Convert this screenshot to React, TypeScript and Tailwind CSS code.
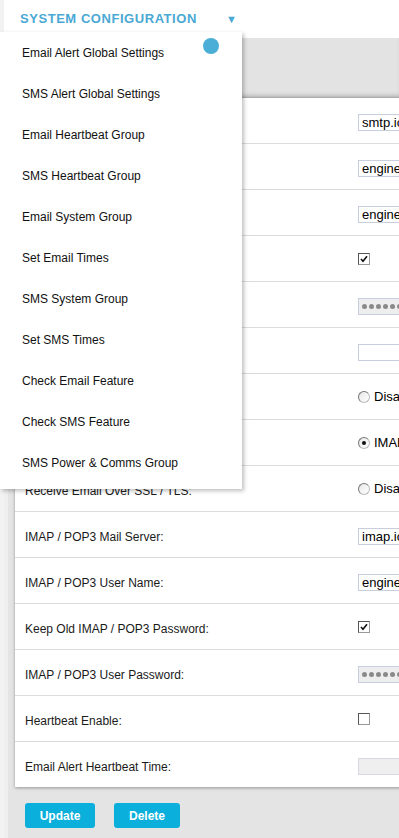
import React from "react";

type Row =
  | { label: string; kind: "text"; value: string }
  | { label: string; kind: "password"; disabled?: boolean }
  | { label: string; kind: "empty"; disabled?: boolean }
  | { label: string; kind: "check"; checked: boolean }
  | { label: string; kind: "radio"; options: string[]; selected: number };

const rows: Row[] = [
  { label: "SMTP Mail Server:", kind: "text", value: "smtp.icloud.com" },
  { label: "SMTP User Name:", kind: "text", value: "engineer@example.com" },
  { label: "Email From Address:", kind: "text", value: "engineer@example.com" },
  { label: "Keep Old SMTP Password:", kind: "check", checked: true },
  { label: "SMTP User Password:", kind: "password" },
  { label: "SMTP Port:", kind: "empty" },
  { label: "Send Email Over SSL / TLS:", kind: "radio", options: ["Disabled", "Enabled"], selected: -1 },
  { label: "Receive Email Protocol:", kind: "radio", options: ["IMAP", "POP3"], selected: 0 },
  { label: "Receive Email Over SSL / TLS:", kind: "radio", options: ["Disabled", "Enabled"], selected: -1 },
  { label: "IMAP / POP3 Mail Server:", kind: "text", value: "imap.icloud.com" },
  { label: "IMAP / POP3 User Name:", kind: "text", value: "engineer" },
  { label: "Keep Old IMAP / POP3 Password:", kind: "check", checked: true },
  { label: "IMAP / POP3 User Password:", kind: "password" },
  { label: "Heartbeat Enable:", kind: "check", checked: false },
  { label: "Email Alert Heartbeat Time:", kind: "empty", disabled: true },
];

const menuItems = [
  "Email Alert Global Settings",
  "SMS Alert Global Settings",
  "Email Heartbeat Group",
  "SMS Heartbeat Group",
  "Email System Group",
  "Set Email Times",
  "SMS System Group",
  "Set SMS Times",
  "Check Email Feature",
  "Check SMS Feature",
  "SMS Power & Comms Group",
];

const Checkbox = ({ checked }: { checked: boolean }) => (
  <span className="w-[12px] h-[12px] border border-t-[#555] border-l-[#555] border-r-[#999] border-b-[#999] bg-white flex items-center justify-center">
    {checked && (
      <svg width="8" height="8" viewBox="0 0 8 8">
        <path d="M1 4 L3 6.2 L7 1.2" stroke="#111" strokeWidth="1.6" fill="none" />
      </svg>
    )}
  </span>
);

const Radio = ({ checked }: { checked: boolean }) => (
  <span className="w-[12px] h-[12px] rounded-full border border-t-[#777] border-l-[#777] border-r-[#bbb] border-b-[#bbb] bg-gradient-to-br from-[#e8e8e8] to-white flex items-center justify-center">
    {checked && <span className="w-[4px] h-[4px] rounded-full bg-[#111]" />}
  </span>
);

const Control = ({ row }: { row: Row }) => {
  switch (row.kind) {
    case "text":
      return (
        <div className="mt-1 w-[200px] h-[17px] border border-[#c9cedf] bg-white pl-[3px] text-[13px] leading-[15px] text-black whitespace-nowrap overflow-hidden">
          {row.value}
        </div>
      );
    case "password":
      return (
        <div className="mt-1 w-[200px] h-[17px] border border-[#c9cedf] bg-[#eeeeee] pl-[3px] flex items-center gap-[2px]">
          {Array.from({ length: 10 }).map((_, i) => (
            <span key={i} className="w-[5px] h-[5px] rounded-full bg-[#8a8a8a]" />
          ))}
        </div>
      );
    case "empty":
      return (
        <div
          className={
            row.disabled
              ? "mt-1 w-[200px] h-[17px] border border-[#d6d8e2] bg-[#efefef]"
              : "mt-1 w-[200px] h-[17px] border border-[#c9cedf] bg-white"
          }
        />
      );
    case "check":
      return <Checkbox checked={row.checked} />;
    case "radio":
      return (
        <div className="flex items-center gap-6">
          {row.options.map((o, i) => (
            <label key={o} className="flex items-center gap-[4px] text-[13px] text-black">
              <Radio checked={row.selected === i} />
              <span className="mt-[1px]">{o}</span>
            </label>
          ))}
        </div>
      );
  }
};

export default function App() {
  return (
    <div className="relative w-[399px] h-[838px] overflow-hidden bg-white font-['Liberation_Sans',Arial,sans-serif] flex">
      <div className="w-[4px] shrink-0 bg-[#f2f2f2]" />
      <div className="flex-1 flex flex-col min-w-0">
        {/* header */}
        <div className="h-[38px] shrink-0 flex items-center pl-[16px] bg-white">
          <span className="text-[13px] font-bold tracking-[0.55px] text-[#4aa9d4] uppercase">System Configuration</span>
          <span className="ml-[29px] text-[11px] text-[#4aa9d4]">▼</span>
        </div>

        {/* body */}
        <div className="flex-1 flex bg-[#e4e4e4]">
          <div className="w-[4px] shrink-0 bg-[#efefef]" />
          <div className="flex-1 flex flex-col min-w-0">
            <div className="h-[60px] shrink-0 bg-[#e3e3e3] shadow-[inset_0_-5px_5px_-3px_rgba(0,0,0,0.25)]" />
            <div className="ml-[7px] w-[700px] bg-white shadow-[0_1px_3px_rgba(0,0,0,0.35)]">
              {rows.map((row, i) => (
                <div
                  key={i}
                  className={
                    "h-[45px] flex items-center " + (i > 0 ? "border-t border-[#dcdcdc] h-[46px]" : "")
                  }
                >
                  <div className="w-[343px] shrink-0 pl-[10px] mt-1 text-[12px] text-[#1a1a1a]">{row.label}</div>
                  <Control row={row} />
                </div>
              ))}
            </div>
            <div className="flex gap-[19px] pl-[17px] pt-[16px]">
              <button className="w-[70px] h-[25px] rounded-[3px] bg-[#0bafdc] text-white text-[12px] font-bold">
                Update
              </button>
              <button className="w-[66px] h-[25px] rounded-[3px] bg-[#0bafdc] text-white text-[12px] font-bold">
                Delete
              </button>
            </div>
          </div>
        </div>
      </div>

      {/* dropdown menu overlay */}
      <div className="absolute left-0 top-[32px] w-[242px] bg-white pb-[6px] shadow-[2px_2px_4px_rgba(0,0,0,0.25)]">
        {menuItems.map((m) => (
          <div key={m} className="h-[41px] flex items-center pl-[22px] text-[12px] text-[#111]">
            {m}
          </div>
        ))}
        <span className="absolute left-[203px] top-[6px] w-[16px] h-[16px] rounded-full bg-[#4aaed6]" />
      </div>
    </div>
  );
}
